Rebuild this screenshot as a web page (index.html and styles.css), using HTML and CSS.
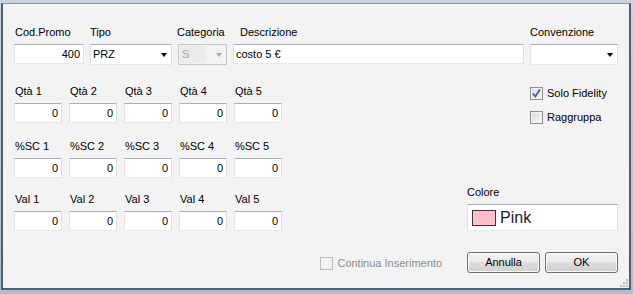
FILE: index.html
```html
<!DOCTYPE html>
<html lang="it">
<head>
<meta charset="utf-8">
<title>Promo</title>
<link rel="stylesheet" href="styles.css">
</head>
<body>
<div class="window">
  <div class="toprow">
    <div class="field w-cod">
      <span class="lbl ind1">Cod.Promo</span>
      <div class="tb num">400</div>
    </div>
    <div class="field w-tipo">
      <span class="lbl">Tipo</span>
      <div class="combo"><span class="ctext">PRZ</span><span class="arrow"></span></div>
    </div>
    <div class="field w-cat">
      <span class="lbl lbl-cat">Categoria</span>
      <div class="combo disabled"><span class="ctext"><span class="dis-inner">S</span></span><span class="arrow grey"></span></div>
    </div>
    <div class="field w-desc">
      <span class="lbl ind7">Descrizione</span>
      <div class="tb">costo 5 €</div>
    </div>
    <div class="field w-conv">
      <span class="lbl">Convenzione</span>
      <div class="combo"><span class="ctext"></span><span class="arrow"></span></div>
    </div>
  </div>

  <div class="mid">
    <div class="grid">
      <div class="row r1">
        <div class="field w-sm"><span class="lbl ind1">Qtà 1</span><div class="tb num">0</div></div>
        <div class="field w-sm"><span class="lbl ind1">Qtà 2</span><div class="tb num">0</div></div>
        <div class="field w-sm"><span class="lbl ind1">Qtà 3</span><div class="tb num">0</div></div>
        <div class="field w-sm"><span class="lbl ind1">Qtà 4</span><div class="tb num">0</div></div>
        <div class="field w-sm"><span class="lbl ind1">Qtà 5</span><div class="tb num">0</div></div>
      </div>
      <div class="row r2">
        <div class="field w-sm"><span class="lbl ind1">%SC 1</span><div class="tb num">0</div></div>
        <div class="field w-sm"><span class="lbl ind1">%SC 2</span><div class="tb num">0</div></div>
        <div class="field w-sm"><span class="lbl ind1">%SC 3</span><div class="tb num">0</div></div>
        <div class="field w-sm"><span class="lbl ind1">%SC 4</span><div class="tb num">0</div></div>
        <div class="field w-sm"><span class="lbl ind1">%SC 5</span><div class="tb num">0</div></div>
      </div>
      <div class="row r3">
        <div class="field w-sm"><span class="lbl ind1">Val 1</span><div class="tb num">0</div></div>
        <div class="field w-sm"><span class="lbl ind1">Val 2</span><div class="tb num">0</div></div>
        <div class="field w-sm"><span class="lbl ind1">Val 3</span><div class="tb num">0</div></div>
        <div class="field w-sm"><span class="lbl ind1">Val 4</span><div class="tb num">0</div></div>
        <div class="field w-sm"><span class="lbl ind1">Val 5</span><div class="tb num">0</div></div>
      </div>
    </div>

    <div class="side">
      <div class="checks">
        <div class="chk c1">
          <span class="box">
            <svg width="11" height="11" viewBox="0 0 11 11"><path d="M2 5.5 L4.3 8.5 L9 1.5" fill="none" stroke="#4a5d9a" stroke-width="1.8"/></svg>
          </span>
          <span>Solo Fidelity</span>
        </div>
        <div class="chk c2">
          <span class="box"></span>
          <span>Raggruppa</span>
        </div>
      </div>
      <div class="colore">
        <span class="lbl">Colore</span>
        <div class="colorbox"><span class="swatch"></span><span class="cname">Pink</span></div>
      </div>
    </div>
  </div>

  <div class="bottom">
    <div class="chk disabled-chk">
      <span class="box dbox"></span>
      <span>Continua Inserimento</span>
    </div>
    <div class="btn">Annulla</div>
    <div class="btn">OK</div>
  </div>

  <svg class="grip" width="9" height="9" viewBox="0 0 9 9">
    <g fill="#b8bcc2">
      <rect x="7" y="1" width="2" height="2"/>
      <rect x="4" y="4" width="2" height="2"/><rect x="7" y="4" width="2" height="2"/>
      <rect x="1" y="7" width="2" height="2"/><rect x="4" y="7" width="2" height="2"/><rect x="7" y="7" width="2" height="2"/>
    </g>
  </svg>
</div>
</body>
</html>
```

FILE: styles.css
```css
* { box-sizing: border-box; }

html, body {
  margin: 0;
  padding: 0;
}

body {
  width: 633px;
  height: 294px;
  background: linear-gradient(#c7d3e0, #aebfd2);
  font-family: "Liberation Sans", Arial, sans-serif;
  font-size: 11px;
  color: #000;
  overflow: hidden;
}

.window {
  position: relative;
  margin: 3px 2px 4px 1px;
  height: 287px;
  background: #f3f3f3;
  border-top: 1px solid #8a96a3;
  border-left: 2px solid #535e6a;
  border-right: 2px solid #535e6a;
  border-bottom: 2px solid #535e6a;
  padding: 22px 11px 0 11px;
}

.field {
  display: flex;
  flex-direction: column;
}

.lbl {
  display: block;
  height: 13px;
  line-height: 13px;
  margin-bottom: 5px;
  white-space: nowrap;
}

.ind1 { padding-left: 1px; }
.ind7 { padding-left: 7px; }
.lbl-cat { margin-left: -1px; }

.toprow {
  display: flex;
  gap: 6px;
}

.w-cod { width: 70px; }
.w-tipo { width: 82px; }
.w-cat { width: 49px; }
.w-desc { width: 291px; }
.w-conv { width: 88px; }
.w-sm { width: 48px; }

.tb {
  height: 20px;
  line-height: 18px;
  background: #fff;
  border: 1px solid;
  border-color: #abadb3 #dbdfe6 #e3e9ef #e2e3ea;
  border-radius: 1px;
  padding: 0 2px;
  white-space: nowrap;
  overflow: hidden;
}

.num { text-align: right; padding-right: 3px; }

.combo {
  height: 21px;
  display: flex;
  align-items: center;
  background: #fff;
  border: 1px solid;
  border-color: #abadb3 #dbdfe6 #e3e9ef #e2e3ea;
  border-radius: 1px;
  padding: 0 4px 0 2px;
}

.ctext {
  flex: 1;
  line-height: 17px;
  white-space: nowrap;
}

.arrow {
  width: 0;
  height: 0;
  border-left: 3.5px solid transparent;
  border-right: 3.5px solid transparent;
  border-top: 4px solid #000;
  margin-top: 1px;
}

.arrow.grey { border-top-color: #a9a9a9; }

.combo.disabled {
  background: #f3f3f3;
  border-color: #c3c5c8;
  padding: 1px 4px 1px 1px;
}

.dis-inner {
  display: block;
  width: 26px;
  height: 17px;
  line-height: 17px;
  background: #ebebeb;
  color: #a3a3a3;
  padding-left: 2px;
}

.mid {
  display: flex;
  margin-top: 20px;
}

.grid {
  display: flex;
  flex-direction: column;
}

.row {
  display: flex;
  gap: 7px;
}

.r2 { margin-top: 17px; }
.r3 { margin-top: 15px; }

.side {
  margin-left: auto;
  width: 151px;
  display: flex;
  flex-direction: column;
}

.checks {
  padding-left: 63px;
  padding-top: 2px;
}

.chk {
  display: flex;
  align-items: center;
  height: 13px;
  line-height: 13px;
  white-space: nowrap;
}

.c2 { margin-top: 11px; }

.box {
  width: 13px;
  height: 13px;
  border: 1px solid #8e8f8f;
  background: linear-gradient(135deg, #dcdcdc, #f8f8f8);
  box-shadow: inset 0 0 0 1px #f4f4f4;
  margin-right: 4px;
  display: flex;
  align-items: center;
  justify-content: center;
}

.box svg { display: block; }

.colore {
  margin-top: 62px;
}

.colorbox {
  height: 27px;
  background: #fff;
  border: 1px solid;
  border-color: #abadb3 #dbdfe6 #e3e9ef #e2e3ea;
  display: flex;
  align-items: center;
  padding-left: 4px;
}

.swatch {
  width: 24px;
  height: 16px;
  background: #ffc0cb;
  border: 1px solid #4b2d35;
  margin-right: 4px;
}

.cname {
  font-size: 16px;
  color: #1a1a2a;
}

.bottom {
  display: flex;
  align-items: center;
  justify-content: flex-end;
  margin-top: 21px;
  gap: 5px;
}

.disabled-chk {
  color: #8d8d8d;
  margin-right: 20px;
  margin-top: 2px;
}

.dbox {
  border-color: #bcbcbc;
  background: #f3f3f3;
  box-shadow: none;
}

.btn {
  width: 73px;
  height: 21px;
  line-height: 19px;
  text-align: center;
  border: 1px solid #707070;
  border-radius: 3px;
  background: linear-gradient(#f2f2f2 0%, #ebebeb 45%, #dddddd 50%, #cfcfcf 100%);
  box-shadow: inset 0 0 0 1px #fbfbfb;
}

.grip {
  position: absolute;
  right: 1px;
  bottom: 1px;
}
```
